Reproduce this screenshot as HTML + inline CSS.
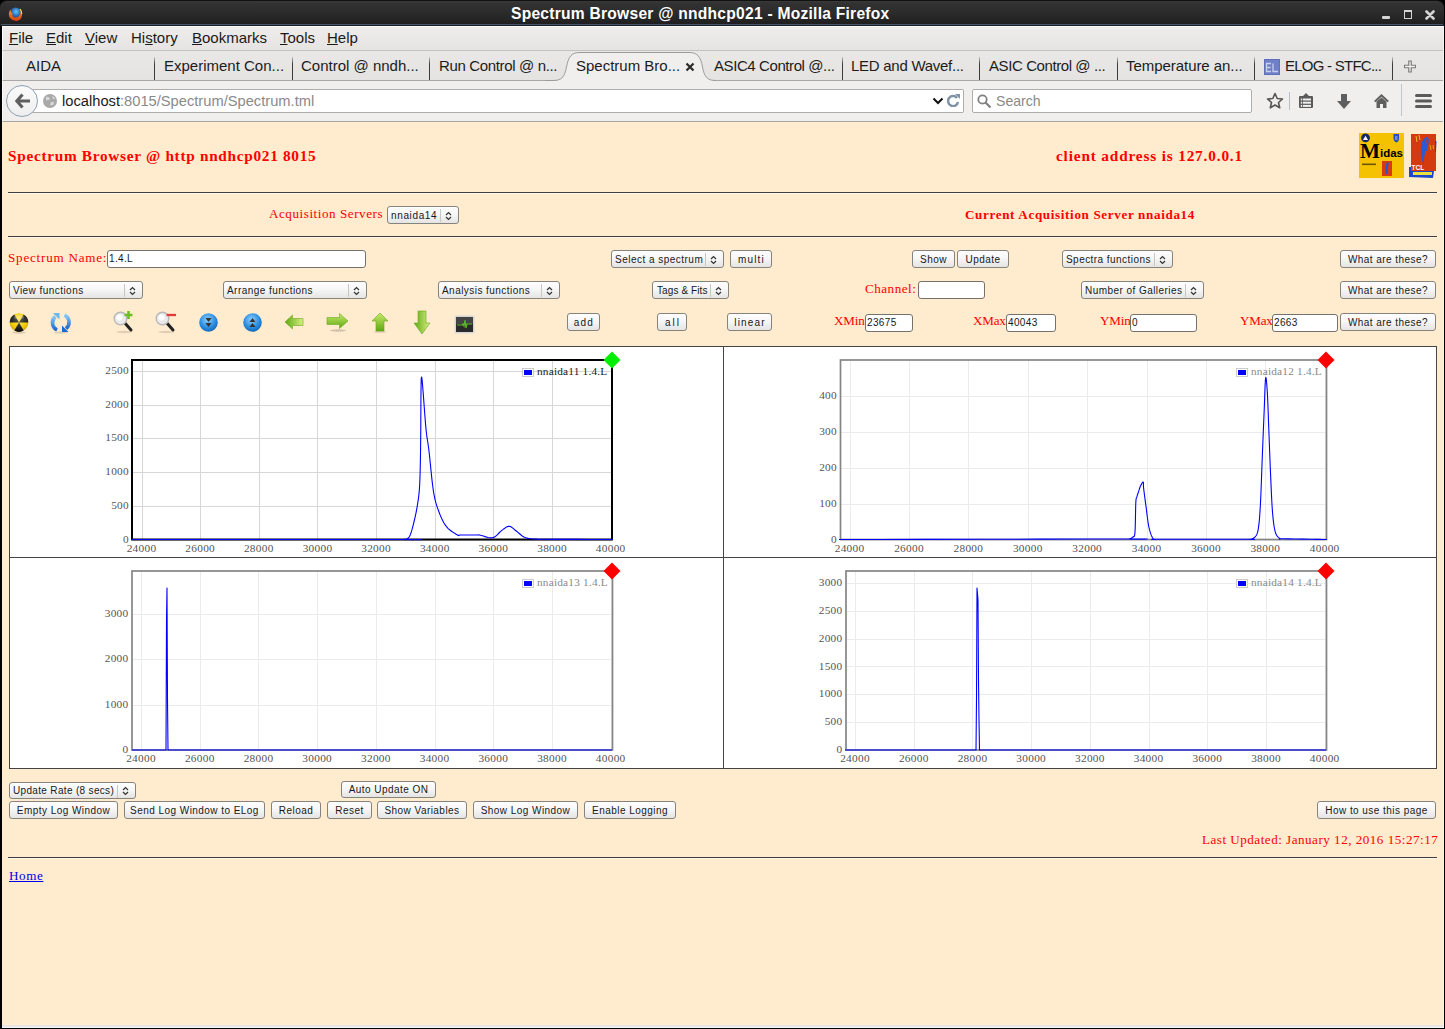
<!DOCTYPE html>
<html><head><meta charset="utf-8">
<style>
*{box-sizing:border-box;margin:0;padding:0}
html,body{width:1445px;height:1029px;overflow:hidden;background:#000;font-family:"Liberation Sans",sans-serif}
.a{position:absolute}
#title{left:0;top:0;width:1444px;height:26px;background:linear-gradient(#3a3a3a 0,#323232 8%,#2c2c2c 45%,#1d1d1d 100%);border-radius:7px 7px 0 0;border-top:1px solid #111}
#title .t{left:511px;top:4px;color:#fff;font-weight:bold;font-size:15.6px;letter-spacing:0.25px;white-space:nowrap}
#menu{left:2px;top:26px;width:1441px;height:24px;background:linear-gradient(#eeedeb,#e5e4e2);border-top:1px solid #fafafa;border-left:1px solid #fafafa}
#menu span{position:absolute;top:2px;font-size:15px;color:#1a1a1a}
#tabs{left:2px;top:50px;width:1441px;height:31px;background:linear-gradient(#e9e8e6,#e4e3e1);border-top:1px solid #c4c3c1;border-bottom:1px solid #a9a8a6;border-left:1px solid #fafafa}
.tab{position:absolute;top:57px;font-size:15px;color:#1c1c1c;white-space:nowrap}
.sep{position:absolute;top:57px;width:1px;height:23px;background:linear-gradient(#c8c8c8,#3c3c3c 30%,#3c3c3c)}
#nav{left:2px;top:81px;width:1441px;height:41px;background:#f0efed;border-bottom:1px solid #a6a5a3;border-left:1px solid #fafafa}
#bot{left:2px;top:1025px;width:1441px;height:2px;background:#e9e8e6}
</style></head><body>
<div id="title" class="a">
<svg class="a" style="left:7px;top:5px" width="16" height="16" viewBox="0 0 16 16">
<defs><radialGradient id="ffg" cx="0.55" cy="0.35" r="0.55"><stop offset="0" stop-color="#6ac4f0"/><stop offset="0.6" stop-color="#2a70c0"/><stop offset="1" stop-color="#1c3a80"/></radialGradient>
<linearGradient id="ffo" x1="0" y1="0" x2="0" y2="1"><stop offset="0" stop-color="#f8a020"/><stop offset="1" stop-color="#d83a10"/></linearGradient></defs>
<circle cx="8.5" cy="7.5" r="6" fill="url(#ffg)"/>
<path d="M2.5 5 Q1 9 3 12 Q6 15.5 10 15 Q14 14 15 9.5 Q15.5 5 13 3 Q14.5 7 12 10 Q9.5 12.5 6.5 11 Q4.5 9.5 5.5 7 Q3.5 7 3.8 4 Z" fill="url(#ffo)"/>
<path d="M13 3 Q15 5.5 14.8 8" stroke="#f8e040" stroke-width="1.2" fill="none"/>
</svg>
<div class="t a">Spectrum Browser @ nndhcp021 - Mozilla Firefox</div>
<div class="a" style="left:1px;top:23px;width:1442px;height:1px;background:#4d6481;opacity:0.8"></div>
<div class="a" style="left:1382px;top:15px;width:8px;height:3px;background:#d4d4d4;border-radius:1px"></div>
<div class="a" style="left:1404px;top:9px;width:8px;height:9px;border:1.5px solid #d4d4d4;border-top-width:2.5px"></div>
<svg class="a" style="left:1425px;top:9px" width="10" height="10" viewBox="0 0 10 10"><path d="M1.5 1.5 L8.5 8.5 M8.5 1.5 L1.5 8.5" stroke="#d4d4d4" stroke-width="2.6" stroke-linecap="round"/></svg>
</div>
<div id="menu" class="a">
<span style="left:6px"><u>F</u>ile</span>
<span style="left:43px"><u>E</u>dit</span>
<span style="left:82px"><u>V</u>iew</span>
<span style="left:128px">Hi<u>s</u>tory</span>
<span style="left:189px"><u>B</u>ookmarks</span>
<span style="left:277px"><u>T</u>ools</span>
<span style="left:324px"><u>H</u>elp</span>
</div>
<div id="tabs" class="a"></div>
<svg class="a" style="left:0;top:0" width="1445" height="82" viewBox="0 0 1445 82">
<path d="M545 82 L545 80.5 L553 80.5 C562 80.5 564.5 77 566.5 67 C568.5 56 572 52.5 580 52.5 L689 52.5 C697 52.5 700.5 56 702.5 67 C704.5 77 707 80.5 716 80.5 L716 82Z" fill="#f0efed"/>
<path d="M545 80.5 L553 80.5 C562 80.5 564.5 77 566.5 67 C568.5 56 572 52.5 580 52.5 L689 52.5 C697 52.5 700.5 56 702.5 67 C704.5 77 707 80.5 716 80.5" fill="none" stroke="#9c9b99" stroke-width="1"/>
<path d="M686.5 63.5 L693.5 70.5 M693.5 63.5 L686.5 70.5" stroke="#2a2a2a" stroke-width="2.2"/>
<rect x="1264" y="59" width="16" height="16" fill="#5f6fb8"/><rect x="1265" y="60" width="14" height="14" fill="#7080c8"/>
<path d="M1271 63.5 H1266.5 V71.5 H1271 M1266.5 67.5 H1270.5 M1273 63.5 V71.5 H1278" stroke="#c8d0f0" stroke-width="1.3" fill="none"/>
<path d="M1410 60.5 V72.5 M1404 66.5 H1416" stroke="#7a7a7a" stroke-width="3.6"/>
<path d="M1410 61.5 V71.5 M1405 66.5 H1415" stroke="#f0f0f0" stroke-width="1.3"/>
</svg>
<div class="a" style="left:0;top:0;width:1445px;height:0">
<span class="tab" style="left:26px">AIDA</span>
<span class="tab" style="left:164px">Experiment Con...</span>
<span class="tab" style="left:301px">Control @ nndh...</span>
<span class="tab" style="left:439px;letter-spacing:-0.35px">Run Control @ n...</span>
<span class="tab" style="left:576px">Spectrum Bro...</span>
<span class="tab" style="left:714px;letter-spacing:-0.41px">ASIC4 Control @...</span>
<span class="tab" style="left:851px;letter-spacing:-0.27px">LED and Wavef...</span>
<span class="tab" style="left:989px;letter-spacing:-0.41px">ASIC Control @ ...</span>
<span class="tab" style="left:1126px;letter-spacing:-0.05px">Temperature an...</span>
<span class="tab" style="left:1285px;letter-spacing:-0.75px">ELOG - STFC...</span>
<div class="sep" style="left:154px"></div>
<div class="sep" style="left:292px"></div>
<div class="sep" style="left:429px"></div>
<div class="sep" style="left:842px"></div>
<div class="sep" style="left:979px"></div>
<div class="sep" style="left:1117px"></div>
<div class="sep" style="left:1254px"></div>
<div class="sep" style="left:1392px"></div>
</div>
<div id="nav" class="a">
<div class="a" style="left:30px;top:8px;width:931px;height:24px;background:#fff;border:1px solid #aeadab;border-left:none;border-radius:0 2px 2px 0"></div>
<div class="a" style="left:3px;top:4px;width:32px;height:32px;border-radius:50%;border:1px solid #8fa0b3;background:linear-gradient(#fbfbfb,#eeeeee)"></div>
<svg class="a" style="left:12px;top:12px" width="16" height="16" viewBox="0 0 16 16"><path d="M7.5 1.5 L1.8 8 L7.5 14.5 M2.5 8 H15" stroke="#5f5f5f" stroke-width="3.2" fill="none" stroke-linejoin="miter"/></svg>
<svg class="a" style="left:39px;top:12px" width="16" height="16" viewBox="0 0 16 16"><circle cx="8" cy="8" r="7" fill="#a9a9a9"/><path d="M4 4 Q7 3 8 6 Q6 8 4 7Z M9 9 Q12 8 12 11 Q10 13 8 12Z M10 3 Q13 4 13 6 L11 6Z" fill="#d9d9d9"/></svg>
<div class="a" style="left:59px;top:12px;font-size:14.7px;color:#1a1a1a;white-space:nowrap">localhost<span style="color:#8a8a8a">:8015/Spectrum/Spectrum.tml</span></div>
<svg class="a" style="left:929px;top:16px" width="12" height="8" viewBox="0 0 12 8"><path d="M1.5 1.5 L6 6 L10.5 1.5" stroke="#111" stroke-width="2" fill="none"/></svg>
<svg class="a" style="left:944px;top:13px" width="14" height="13" viewBox="0 0 14 13"><path d="M10 4 A5 5 0 1 0 11 8" stroke="#7f93a6" stroke-width="2.5" fill="none"/><path d="M8 0 L13 0 L13 5Z" fill="#7f93a6"/></svg>
<div class="a" style="left:969px;top:8px;width:280px;height:24px;background:#fff;border:1px solid #aeadab;border-radius:2px"></div>
<svg class="a" style="left:974px;top:13px" width="15" height="15" viewBox="0 0 15 15"><circle cx="5.5" cy="5.5" r="4.2" stroke="#808080" stroke-width="1.8" fill="none"/><path d="M8.5 8.5 L13.5 13.5" stroke="#808080" stroke-width="2.2"/></svg>
<div class="a" style="left:993px;top:12px;font-size:14.1px;color:#8a8a8a">Search</div>
<svg class="a" style="left:1263px;top:11px" width="18" height="18" viewBox="0 0 18 18"><path d="M9 1.5 L11.2 6.5 L16.5 7 L12.5 10.5 L13.7 15.8 L9 13 L4.3 15.8 L5.5 10.5 L1.5 7 L6.8 6.5Z" stroke="#555" stroke-width="1.6" fill="none" stroke-linejoin="round"/></svg>
<div class="a" style="left:1286px;top:11px;width:1px;height:18px;background:#b8bfc8"></div>
<svg class="a" style="left:1295px;top:11px" width="16" height="17" viewBox="0 0 16 17"><path d="M8 1 L11 4 L14 4 Q15 4 15 5 L15 15 Q15 16 14 16 L2 16 Q1 16 1 15 L1 5 Q1 4 2 4 L5 4Z" fill="#5a5a5a"/><rect x="5" y="6.5" width="8" height="2" fill="#f0f0f0"/><rect x="5" y="9.7" width="8" height="2" fill="#f0f0f0"/><rect x="5" y="12.9" width="8" height="2" fill="#f0f0f0"/><rect x="2.8" y="6.5" width="1.4" height="2" fill="#f0f0f0"/><rect x="2.8" y="9.7" width="1.4" height="2" fill="#f0f0f0"/><rect x="2.8" y="12.9" width="1.4" height="2" fill="#f0f0f0"/></svg>
<svg class="a" style="left:1333px;top:12px" width="16" height="17" viewBox="0 0 16 17"><path d="M5 1 L11 1 L11 8 L15 8 L8 16 L1 8 L5 8Z" fill="#5f5f5f"/></svg>
<svg class="a" style="left:1370px;top:12px" width="17" height="16" viewBox="0 0 17 16"><path d="M8.5 1 L16 8 L14.5 9.3 L8.5 3.8 L2.5 9.3 L1 8Z" fill="#5f5f5f"/><path d="M3.5 8.5 L8.5 4.5 L13.5 8.5 L13.5 15 L10 15 L10 11 L7 11 L7 15 L3.5 15Z" fill="#5f5f5f"/></svg>
<div class="a" style="left:1398px;top:3px;width:1px;height:32px;background:#c0c6ce"></div>
<svg class="a" style="left:1412px;top:13px" width="17" height="14" viewBox="0 0 17 14"><rect x="0" y="0" width="17" height="3" rx="1.5" fill="#5a5a5a"/><rect x="0" y="5.5" width="17" height="3" rx="1.5" fill="#5a5a5a"/><rect x="0" y="11" width="17" height="3" rx="1.5" fill="#5a5a5a"/></svg>
</div>
<style>
#page{left:2px;top:122px;width:1441px;height:903px;background:#ffebcd}
.sv{position:absolute;font-family:"Liberation Serif",serif;color:#f00;white-space:nowrap;line-height:1}
.bt{position:absolute;height:18px;border:1px solid #86827d;border-radius:3px;background:linear-gradient(#fdfdfd 0%,#f7f7f7 45%,#e5e4e3 100%);font-family:"Liberation Sans",sans-serif;font-size:10px;letter-spacing:0.45px;color:#181818;text-align:center;line-height:17px;white-space:nowrap}
.sl{text-align:left;padding-left:3px}
.sl i{position:absolute;top:2px;width:1px;height:13px;background:#c8c6c3}
.sl b{position:absolute;top:2px;width:7px;height:10px}
.in{position:absolute;height:18px;background:#fff;border:1px solid #75716d;border-radius:3px;font-family:"Liberation Sans",sans-serif;font-size:10px;letter-spacing:0.36px;color:#181818;line-height:15px;padding-left:1px;white-space:nowrap}
.hr{position:absolute;height:2px;border-top:1px solid #3f3f3f;border-bottom:1px solid #fff4e6}
</style><div id="page" class="a"></div>
<div class="sv" style="left:8px;top:148px;font-size:15.3px;font-weight:bold;letter-spacing:0.7px">Spectrum Browser @ http nndhcp021 8015</div>
<div class="sv" style="left:1056px;top:148px;font-size:15.3px;font-weight:bold;letter-spacing:0.83px">client address is 127.0.0.1</div>
<svg class="a" style="left:1359px;top:133px" width="45" height="45" viewBox="0 0 45 45">
<rect x="0" y="0" width="45" height="45" fill="#f5c200"/>
<circle cx="6.5" cy="4.8" r="4.4" fill="#14296a"/>
<path d="M4 7 L6.5 2.8 L9 7Z" fill="#fff"/>
<path d="M34.5 1 L40 1 L40 5.5 Q40 8.5 37.2 9.5 Q34.5 8.5 34.5 5.5Z" fill="#2a4cc0"/>
<path d="M36 4 H38.5 M36 6 H38.5" stroke="#fff" stroke-width="0.7"/>
<text x="1" y="25" font-family="Liberation Serif" font-weight="bold" font-size="21" fill="#000" textLength="20" lengthAdjust="spacingAndGlyphs">M</text>
<text x="21" y="24" font-family="Liberation Sans" font-weight="bold" font-size="10" fill="#000" textLength="23" lengthAdjust="spacingAndGlyphs">idas</text>
<rect x="3" y="30.5" width="14" height="1.6" fill="#4a3a10" opacity="0.8"/>
<rect x="23" y="28" width="10" height="15" fill="#d63a12"/>
<path d="M29 29.5 Q27 34 28 41" stroke="#2a55c8" stroke-width="2" fill="none"/>
</svg>
<svg class="a" style="left:1408px;top:133px" width="30" height="46" viewBox="0 0 30 46">
<rect x="3" y="1" width="25" height="37" fill="#d43a10"/>
<path d="M1 34 L3 34 L3 38 L26 38 L25 45 L1 44Z" fill="#1a48c8"/>
<path d="M27 8 L28.5 8 L28 19 L27 19Z" fill="#1a48c8"/>
<path d="M17.5 4.5 Q12 8 13 20 Q13.5 27 16 33 Q15 26 17 20 Q19.5 13 17.5 4.5Z" fill="#2a5ad8"/>
<path d="M17.5 4.5 Q21 6 19.5 10 Q18 14 18 18" stroke="#2a5ad8" stroke-width="2" fill="none"/>
<path d="M8 3 L9 9 M11 2 L12 7" stroke="#f0c020" stroke-width="1" />
<path d="M22 12 L23 17 M25 12 L25.5 16" stroke="#f0c020" stroke-width="0.8" />
<text x="3.5" y="36.5" font-family="Liberation Sans" font-weight="bold" font-size="6.5" fill="#fff">TCL</text>
<rect x="5" y="39" width="19" height="3" fill="#e8e040"/>
</svg>

<div class="hr" style="left:8px;top:192px;width:1429px"></div>
<div class="sv" style="left:269px;top:207px;font-size:13.1px;font-weight:normal;letter-spacing:0.55px">Acquisition Servers</div>
<div class="bt sl" style="left:387px;top:206px;width:72px;height:18px;letter-spacing:0.64px">nnaida14<i style="left:52px"></i><b style="left:57px"><svg width="7" height="10" viewBox="0 0 7 10"><path d="M1 4 L3.5 1.5 L6 4 M1 6 L3.5 8.5 L6 6" stroke="#333" stroke-width="1.2" fill="none"/></svg></b></div>
<div class="sv" style="left:965px;top:208px;font-size:13.1px;font-weight:bold;letter-spacing:0.65px">Current Acquisition Server nnaida14</div>
<div class="hr" style="left:8px;top:236px;width:1429px"></div>
<div class="sv" style="left:8px;top:251px;font-size:13.1px;font-weight:normal;letter-spacing:0.78px">Spectrum Name:</div>
<div class="in" style="left:107px;top:250px;width:259px">1.4.L</div>
<div class="bt sl" style="left:611px;top:250px;width:113px;height:18px;letter-spacing:0.48px">Select a spectrum<i style="left:93px"></i><b style="left:98px"><svg width="7" height="10" viewBox="0 0 7 10"><path d="M1 4 L3.5 1.5 L6 4 M1 6 L3.5 8.5 L6 6" stroke="#333" stroke-width="1.2" fill="none"/></svg></b></div>
<div class="bt" style="left:730px;top:250px;width:42px;letter-spacing:1.16px;text-indent:1px">multi</div>
<div class="bt" style="left:912px;top:250px;width:43px;">Show</div>
<div class="bt" style="left:957px;top:250px;width:52px;">Update</div>
<div class="bt sl" style="left:1062px;top:250px;width:111px;height:18px;">Spectra functions<i style="left:91px"></i><b style="left:96px"><svg width="7" height="10" viewBox="0 0 7 10"><path d="M1 4 L3.5 1.5 L6 4 M1 6 L3.5 8.5 L6 6" stroke="#333" stroke-width="1.2" fill="none"/></svg></b></div>
<div class="bt" style="left:1340px;top:250px;width:96px;">What are these?</div>
<div class="bt sl" style="left:9px;top:281px;width:134px;height:18px;">View functions<i style="left:114px"></i><b style="left:119px"><svg width="7" height="10" viewBox="0 0 7 10"><path d="M1 4 L3.5 1.5 L6 4 M1 6 L3.5 8.5 L6 6" stroke="#333" stroke-width="1.2" fill="none"/></svg></b></div>
<div class="bt sl" style="left:223px;top:281px;width:144px;height:18px;">Arrange functions<i style="left:124px"></i><b style="left:129px"><svg width="7" height="10" viewBox="0 0 7 10"><path d="M1 4 L3.5 1.5 L6 4 M1 6 L3.5 8.5 L6 6" stroke="#333" stroke-width="1.2" fill="none"/></svg></b></div>
<div class="bt sl" style="left:438px;top:281px;width:122px;height:18px;">Analysis functions<i style="left:102px"></i><b style="left:107px"><svg width="7" height="10" viewBox="0 0 7 10"><path d="M1 4 L3.5 1.5 L6 4 M1 6 L3.5 8.5 L6 6" stroke="#333" stroke-width="1.2" fill="none"/></svg></b></div>
<div class="bt sl" style="left:652px;top:281px;width:77px;height:18px;letter-spacing:0.1px;padding-left:4px">Tags &amp; Fits<i style="left:57px"></i><b style="left:62px"><svg width="7" height="10" viewBox="0 0 7 10"><path d="M1 4 L3.5 1.5 L6 4 M1 6 L3.5 8.5 L6 6" stroke="#333" stroke-width="1.2" fill="none"/></svg></b></div>
<div class="sv" style="left:865px;top:282px;font-size:13.1px;font-weight:normal;letter-spacing:0.5px">Channel:</div>
<div class="in" style="left:918px;top:281px;width:67px"></div>
<div class="bt sl" style="left:1081px;top:281px;width:123px;height:18px;">Number of Galleries<i style="left:103px"></i><b style="left:108px"><svg width="7" height="10" viewBox="0 0 7 10"><path d="M1 4 L3.5 1.5 L6 4 M1 6 L3.5 8.5 L6 6" stroke="#333" stroke-width="1.2" fill="none"/></svg></b></div>
<div class="bt" style="left:1340px;top:281px;width:96px;">What are these?</div>
<div class="bt" style="left:567px;top:313px;width:33px;letter-spacing:1.2px;text-indent:1px">add</div>
<div class="bt" style="left:657px;top:313px;width:30px;letter-spacing:2px;text-indent:2px">all</div>
<div class="bt" style="left:727px;top:313px;width:45px;letter-spacing:1.16px;text-indent:1px">linear</div>
<div class="sv" style="left:834px;top:314px;font-size:13.1px;font-weight:normal;letter-spacing:-0.2px">XMin</div>
<div class="in" style="left:865px;top:314px;width:48px">23675</div>
<div class="sv" style="left:973px;top:314px;font-size:13.1px;font-weight:normal;letter-spacing:-0.2px">XMax</div>
<div class="in" style="left:1006px;top:314px;width:50px">40043</div>
<div class="sv" style="left:1100px;top:314px;font-size:13.1px;font-weight:normal;letter-spacing:-0.2px">YMin</div>
<div class="in" style="left:1130px;top:314px;width:67px">0</div>
<div class="sv" style="left:1240px;top:314px;font-size:13.1px;font-weight:normal;letter-spacing:-0.2px">YMax</div>
<div class="in" style="left:1272px;top:314px;width:66px">2663</div>
<div class="bt" style="left:1340px;top:313px;width:96px;">What are these?</div>

<svg class="a" style="left:9px;top:312px" width="21" height="22" viewBox="0 0 21 22">
<defs><radialGradient id="rg1" cx="0.5" cy="0.4" r="0.6"><stop offset="0" stop-color="#ffe860"/><stop offset="0.7" stop-color="#f0c800"/><stop offset="1" stop-color="#c89a00"/></radialGradient>
<radialGradient id="rg2" cx="0.5" cy="0.3" r="0.7"><stop offset="0" stop-color="#555"/><stop offset="1" stop-color="#0a0a0a"/></radialGradient></defs>
<ellipse cx="10" cy="20.5" rx="7" ry="1.2" fill="#000" opacity="0.15"/>
<circle cx="10" cy="10.5" r="9.3" fill="url(#rg1)"/>
<path d="M10 10.5 L14.65 2.45 A9.3 9.3 0 0 1 19.30 10.50Z M10 10.5 L14.65 18.55 A9.3 9.3 0 0 1 5.35 18.55Z M10 10.5 L0.70 10.50 A9.3 9.3 0 0 1 5.35 2.45Z" fill="url(#rg2)"/>
<ellipse cx="10" cy="5" rx="5" ry="2.5" fill="#fff" opacity="0.25"/>
</svg>
<svg class="a" style="left:50px;top:312px" width="22" height="22" viewBox="0 0 22 22">
<defs><linearGradient id="rfg" x1="0" y1="0" x2="0" y2="1"><stop offset="0" stop-color="#8ccaf5"/><stop offset="1" stop-color="#1a6ad0"/></linearGradient></defs>
<ellipse cx="11" cy="20.5" rx="7" ry="1.2" fill="#000" opacity="0.12"/>
<path d="M7 18 A8 8 0 0 1 5.5 4.5" stroke="url(#rfg)" stroke-width="3.6" fill="none"/>
<path d="M3 1 L9.5 1 L9.5 7.5Z" fill="#6ab8f0"/>
<path d="M14.5 3 A8 8 0 0 1 16 16.5" stroke="url(#rfg)" stroke-width="3.6" fill="none"/>
<path d="M12 20 L18.5 20 L12 13.5Z" fill="#1a6ad0"/>
</svg>
<svg class="a" style="left:113px;top:310px" width="22" height="24" viewBox="0 0 22 24">
<ellipse cx="11" cy="22" rx="8" ry="1.2" fill="#000" opacity="0.12"/>
<path d="M11 12 L18 20" stroke="#222" stroke-width="3" stroke-linecap="round"/>
<circle cx="7.5" cy="8.5" r="6.3" fill="#eaeaea" stroke="#b8b8b8" stroke-width="1.4"/>
<circle cx="6.5" cy="7.5" r="3" fill="#fff"/>
<path d="M15.5 1 V9 M11.5 5 H19.5" stroke="#6cbf1a" stroke-width="2.5"/>
</svg>
<svg class="a" style="left:155px;top:310px" width="22" height="24" viewBox="0 0 22 24">
<ellipse cx="11" cy="22" rx="8" ry="1.2" fill="#000" opacity="0.12"/>
<path d="M11 12 L18 20" stroke="#222" stroke-width="3" stroke-linecap="round"/>
<circle cx="7.5" cy="8.5" r="6.3" fill="#eaeaea" stroke="#b8b8b8" stroke-width="1.4"/>
<circle cx="6.5" cy="7.5" r="3" fill="#fff"/>
<path d="M11.5 5 H21" stroke="#e03a3a" stroke-width="2.3"/>
</svg>
<svg class="a" style="left:198px;top:312px" width="21" height="21" viewBox="0 0 21 21">
<defs><radialGradient id="rgb" cx="0.45" cy="0.35" r="0.7"><stop offset="0" stop-color="#8fd0ff"/><stop offset="0.6" stop-color="#2a8de0"/><stop offset="1" stop-color="#1060b0"/></radialGradient></defs>
<circle cx="10.5" cy="10.5" r="9.3" fill="url(#rgb)"/>
<path d="M7.5 6 L10.5 10 L13.5 6Z M7.5 11 L10.5 15 L13.5 11Z" fill="#333"/>
</svg>
<svg class="a" style="left:242px;top:312px" width="21" height="21" viewBox="0 0 21 21">
<circle cx="10.5" cy="10.5" r="9.3" fill="url(#rgb)"/>
<path d="M7.5 10 L10.5 6 L13.5 10Z M7.5 15 L10.5 11 L13.5 15Z" fill="#333"/>
</svg>
<svg class="a" style="left:284px;top:313px" width="20" height="19" viewBox="0 0 20 19">
<defs><linearGradient id="gg" x1="0" y1="0" x2="0" y2="1"><stop offset="0" stop-color="#c8ea6a"/><stop offset="1" stop-color="#5ea812"/></linearGradient>
<linearGradient id="gh" x1="0" y1="0" x2="1" y2="0"><stop offset="0" stop-color="#5ea812"/><stop offset="1" stop-color="#d8f080"/></linearGradient></defs>
<path d="M1 9 L8.5 2 L8.5 5.5 L19 5.5 L19 12.5 L8.5 12.5 L8.5 16 Z" fill="url(#gh)" stroke="#6aa820" stroke-width="0.6"/>
</svg>
<svg class="a" style="left:326px;top:312px" width="23" height="20" viewBox="0 0 23 20">
<ellipse cx="12" cy="18.5" rx="8" ry="1.2" fill="#000" opacity="0.18"/>
<path d="M22 9 L13.5 1.5 L13.5 5.5 L1 5.5 L1 12.5 L13.5 12.5 L13.5 16.5 Z" fill="url(#gg)" stroke="#6aa820" stroke-width="0.6"/>
</svg>
<svg class="a" style="left:371px;top:312px" width="18" height="21" viewBox="0 0 18 21">
<ellipse cx="9" cy="19.8" rx="6" ry="1" fill="#000" opacity="0.15"/>
<path d="M9 1 L17 9 L13 9 L13 19 L5 19 L5 9 L1 9 Z" fill="url(#gg)" stroke="#6aa820" stroke-width="0.6"/>
</svg>
<svg class="a" style="left:413px;top:310px" width="18" height="25" viewBox="0 0 18 25">
<path d="M9 24 L17 13 L13 13 L13 1 L5 1 L5 13 L1 13 Z" fill="url(#gh)" stroke="#6aa820" stroke-width="0.6" transform="rotate(0)"/>
</svg>
<svg class="a" style="left:454px;top:315px" width="21" height="19" viewBox="0 0 21 19">
<rect x="0.5" y="0.5" width="20" height="18" rx="1.5" fill="#d8d8d8"/>
<rect x="2" y="2" width="17" height="15" fill="#2a2a2a"/>
<rect x="2" y="2" width="17" height="7" fill="#444"/>
<path d="M3 10 L8 10 L9 9 L10 11 L11 5 L12 13 L13 9 L18 9" stroke="#5cb82a" stroke-width="1.2" fill="none"/>
</svg>

<div class="a" style="left:9px;top:346px;width:1428px;height:423px;background:#fff;border:1px solid #444"></div>
<div class="a" style="left:723px;top:346px;width:1px;height:423px;background:#444"></div>
<div class="a" style="left:9px;top:557px;width:1428px;height:1px;background:#444"></div>
<svg class="a" style="left:0;top:0" width="1445" height="1029" viewBox="0 0 1445 1029">
<line x1="142.5" y1="360" x2="142.5" y2="539.5" stroke="#d6d6d6" stroke-width="1"/>
<line x1="200.5" y1="360" x2="200.5" y2="539.5" stroke="#d6d6d6" stroke-width="1"/>
<line x1="259.5" y1="360" x2="259.5" y2="539.5" stroke="#d6d6d6" stroke-width="1"/>
<line x1="317.5" y1="360" x2="317.5" y2="539.5" stroke="#d6d6d6" stroke-width="1"/>
<line x1="376.5" y1="360" x2="376.5" y2="539.5" stroke="#d6d6d6" stroke-width="1"/>
<line x1="435.5" y1="360" x2="435.5" y2="539.5" stroke="#d6d6d6" stroke-width="1"/>
<line x1="493.5" y1="360" x2="493.5" y2="539.5" stroke="#d6d6d6" stroke-width="1"/>
<line x1="552.5" y1="360" x2="552.5" y2="539.5" stroke="#d6d6d6" stroke-width="1"/>
<line x1="611.5" y1="360" x2="611.5" y2="539.5" stroke="#d6d6d6" stroke-width="1"/>
<line x1="132" y1="540.5" x2="612" y2="540.5" stroke="#d6d6d6" stroke-width="1"/>
<line x1="132" y1="506.5" x2="612" y2="506.5" stroke="#d6d6d6" stroke-width="1"/>
<line x1="132" y1="472.5" x2="612" y2="472.5" stroke="#d6d6d6" stroke-width="1"/>
<line x1="132" y1="438.5" x2="612" y2="438.5" stroke="#d6d6d6" stroke-width="1"/>
<line x1="132" y1="405.5" x2="612" y2="405.5" stroke="#d6d6d6" stroke-width="1"/>
<line x1="132" y1="371.5" x2="612" y2="371.5" stroke="#d6d6d6" stroke-width="1"/>
<rect x="132" y="360" width="480" height="179.5" fill="none" stroke="#000" stroke-width="2"/>
<clipPath id="cp1"><rect x="131" y="360" width="482" height="180.5"/></clipPath>
<polyline clip-path="url(#cp1)" points="132.00,539.50 129.28,539.50 123.04,539.50 116.88,539.50 114.41,539.50 119.25,539.50 135.00,539.50 167.16,539.50 213.93,539.50 268.00,539.50 322.07,539.50 368.84,539.50 401.00,539.50 416.69,539.53 421.39,539.61 418.78,539.69 412.56,539.72 406.40,539.67 404.00,539.50 404.78,539.32 405.68,539.19 406.64,538.97 407.63,538.54 408.60,537.76 409.50,536.50 410.34,534.67 411.17,532.36 411.97,529.71 412.74,526.84 413.49,523.89 414.20,521.00 414.88,518.12 415.54,515.12 416.17,512.05 416.77,508.93 417.31,505.81 417.80,502.70 418.23,499.82 418.60,497.17 418.92,494.52 419.20,491.60 419.46,488.18 419.70,484.00 419.91,479.10 420.09,473.69 420.24,467.77 420.37,461.34 420.49,454.42 420.60,447.00 420.69,438.41 420.77,428.52 420.83,418.12 420.88,408.04 420.93,399.06 421.00,392.00 421.07,386.88 421.13,383.07 421.19,380.38 421.27,378.59 421.37,377.53 421.50,377.00 421.65,376.98 421.80,377.63 421.98,379.00 422.20,381.15 422.46,384.13 422.80,388.00 423.23,393.32 423.73,400.15 424.29,407.81 424.88,415.63 425.46,422.92 426.00,429.00 426.49,433.55 426.96,437.05 427.42,440.03 427.90,442.99 428.42,446.48 429.00,451.00 429.65,456.92 430.35,463.90 431.09,471.40 431.87,478.87 432.67,485.79 433.50,491.60 434.34,496.23 435.19,500.11 436.06,503.42 436.98,506.37 437.96,509.16 439.00,512.00 440.09,514.85 441.22,517.56 442.41,520.11 443.67,522.49 445.02,524.69 446.50,526.70 448.22,528.55 450.20,530.25 452.28,531.77 454.30,533.09 456.09,534.17 457.50,535.00 458.31,535.48 458.60,535.61 458.68,535.52 458.82,535.31 459.33,535.10 460.50,535.00 462.59,535.00 465.41,535.00 468.60,535.00 471.79,535.00 474.61,535.00 476.70,535.00 477.85,534.97 478.31,534.90 478.41,534.82 478.46,534.79 478.78,534.84 479.70,535.00 481.32,535.42 483.40,536.10 485.76,536.86 488.21,537.52 490.55,537.89 492.60,537.80 494.37,537.12 496.01,535.97 497.54,534.53 499.00,533.00 500.41,531.56 501.80,530.40 503.14,529.42 504.40,528.45 505.61,527.57 506.80,526.87 507.99,526.42 509.20,526.30 510.41,526.59 511.60,527.24 512.79,528.14 514.00,529.19 515.26,530.27 516.60,531.30 517.96,532.35 519.33,533.54 520.74,534.77 522.25,535.95 523.92,536.99 525.80,537.80 528.08,538.36 530.76,538.73 533.59,538.96 536.33,539.10 538.75,539.19 540.60,539.30 541.06,539.39 540.16,539.41 538.94,539.39 538.41,539.35 539.63,539.31 543.60,539.31 551.61,539.33 563.09,539.36 576.30,539.40 589.51,539.44 600.99,539.47 609.00,539.49 613.15,539.50 614.73,539.51 614.59,539.51 613.53,539.50 612.40,539.50 612.00,539.50" fill="none" stroke="#0000ff" stroke-width="1.1" stroke-linejoin="round"/>
<rect x="522.5" y="368.5" width="11" height="8" fill="#fff" stroke="#ccc" stroke-width="1"/>
<rect x="524" y="370" width="8" height="5" fill="#0000ff"/>
<text x="537" y="375" font-family="Liberation Serif" font-size="11.3" fill="#1a1a1a" letter-spacing="0.2">nnaida11 1.4.L</text>
<path d="M612 351.5 L620.5 360 L612 368.5 L603.5 360Z" fill="#00ee00"/>
<text x="141.5" y="551.5" text-anchor="middle" font-family="Liberation Serif" font-size="11.3" fill="#545454" letter-spacing="0.3">24000</text>
<text x="200.2" y="551.5" text-anchor="middle" font-family="Liberation Serif" font-size="11.3" fill="#545454" letter-spacing="0.3">26000</text>
<text x="258.8" y="551.5" text-anchor="middle" font-family="Liberation Serif" font-size="11.3" fill="#545454" letter-spacing="0.3">28000</text>
<text x="317.5" y="551.5" text-anchor="middle" font-family="Liberation Serif" font-size="11.3" fill="#545454" letter-spacing="0.3">30000</text>
<text x="376.1" y="551.5" text-anchor="middle" font-family="Liberation Serif" font-size="11.3" fill="#545454" letter-spacing="0.3">32000</text>
<text x="434.8" y="551.5" text-anchor="middle" font-family="Liberation Serif" font-size="11.3" fill="#545454" letter-spacing="0.3">34000</text>
<text x="493.4" y="551.5" text-anchor="middle" font-family="Liberation Serif" font-size="11.3" fill="#545454" letter-spacing="0.3">36000</text>
<text x="552.1" y="551.5" text-anchor="middle" font-family="Liberation Serif" font-size="11.3" fill="#545454" letter-spacing="0.3">38000</text>
<text x="610.7" y="551.5" text-anchor="middle" font-family="Liberation Serif" font-size="11.3" fill="#545454" letter-spacing="0.3">40000</text>
<text x="129" y="542.5" text-anchor="end" font-family="Liberation Serif" font-size="11.3" fill="#545454" letter-spacing="0.3">0</text>
<text x="129" y="508.8" text-anchor="end" font-family="Liberation Serif" font-size="11.3" fill="#545454" letter-spacing="0.3">500</text>
<text x="129" y="475.1" text-anchor="end" font-family="Liberation Serif" font-size="11.3" fill="#545454" letter-spacing="0.3">1000</text>
<text x="129" y="441.4" text-anchor="end" font-family="Liberation Serif" font-size="11.3" fill="#545454" letter-spacing="0.3">1500</text>
<text x="129" y="407.7" text-anchor="end" font-family="Liberation Serif" font-size="11.3" fill="#545454" letter-spacing="0.3">2000</text>
<text x="129" y="374.0" text-anchor="end" font-family="Liberation Serif" font-size="11.3" fill="#545454" letter-spacing="0.3">2500</text>
</svg>
<svg class="a" style="left:0;top:0" width="1445" height="1029" viewBox="0 0 1445 1029">
<line x1="850.5" y1="360" x2="850.5" y2="539.5" stroke="#ebebeb" stroke-width="1"/>
<line x1="909.5" y1="360" x2="909.5" y2="539.5" stroke="#ebebeb" stroke-width="1"/>
<line x1="968.5" y1="360" x2="968.5" y2="539.5" stroke="#ebebeb" stroke-width="1"/>
<line x1="1028.5" y1="360" x2="1028.5" y2="539.5" stroke="#ebebeb" stroke-width="1"/>
<line x1="1087.5" y1="360" x2="1087.5" y2="539.5" stroke="#ebebeb" stroke-width="1"/>
<line x1="1147.5" y1="360" x2="1147.5" y2="539.5" stroke="#ebebeb" stroke-width="1"/>
<line x1="1206.5" y1="360" x2="1206.5" y2="539.5" stroke="#ebebeb" stroke-width="1"/>
<line x1="1265.5" y1="360" x2="1265.5" y2="539.5" stroke="#ebebeb" stroke-width="1"/>
<line x1="1325.5" y1="360" x2="1325.5" y2="539.5" stroke="#ebebeb" stroke-width="1"/>
<line x1="840" y1="540.5" x2="1326" y2="540.5" stroke="#ebebeb" stroke-width="1"/>
<line x1="840" y1="504.5" x2="1326" y2="504.5" stroke="#ebebeb" stroke-width="1"/>
<line x1="840" y1="468.5" x2="1326" y2="468.5" stroke="#ebebeb" stroke-width="1"/>
<line x1="840" y1="432.5" x2="1326" y2="432.5" stroke="#ebebeb" stroke-width="1"/>
<line x1="840" y1="396.5" x2="1326" y2="396.5" stroke="#ebebeb" stroke-width="1"/>
<rect x="840.5" y="360" width="486" height="179.5" fill="none" stroke="#858585" stroke-width="1.7"/>
<clipPath id="cp2"><rect x="839" y="360" width="488" height="180.5"/></clipPath>
<polyline clip-path="url(#cp2)" points="840.00,539.50 837.09,539.51 830.43,539.52 823.84,539.53 821.19,539.53 826.29,539.52 843.00,539.49 877.14,539.44 926.81,539.35 984.25,539.25 1041.69,539.15 1091.36,539.06 1125.50,539.01 1142.16,539.00 1147.15,539.04 1144.38,539.10 1137.74,539.13 1131.15,539.11 1128.50,539.00 1129.19,538.82 1129.98,538.59 1130.81,538.31 1131.63,537.96 1132.38,537.53 1133.00,537.00 1133.49,536.62 1133.90,536.46 1134.23,536.21 1134.51,535.58 1134.77,534.27 1135.00,532.00 1135.20,528.25 1135.35,523.16 1135.46,517.39 1135.56,511.62 1135.67,506.50 1135.80,502.70 1135.95,500.38 1136.09,499.04 1136.24,498.36 1136.40,498.00 1136.58,497.66 1136.80,497.00 1137.05,496.08 1137.34,495.19 1137.64,494.29 1137.96,493.40 1138.28,492.51 1138.60,491.60 1138.90,490.66 1139.20,489.69 1139.49,488.71 1139.80,487.76 1140.14,486.84 1140.50,486.00 1140.93,485.12 1141.43,484.18 1141.94,483.27 1142.44,482.53 1142.87,482.07 1143.20,482.00 1143.38,482.28 1143.43,482.80 1143.42,483.60 1143.40,484.71 1143.44,486.17 1143.60,488.00 1143.88,490.33 1144.24,493.14 1144.65,496.31 1145.10,499.67 1145.55,503.08 1146.00,506.40 1146.43,509.78 1146.87,513.37 1147.32,517.01 1147.79,520.54 1148.28,523.83 1148.80,526.70 1149.37,529.19 1149.97,531.44 1150.61,533.43 1151.25,535.15 1151.88,536.61 1152.50,537.80 1153.10,538.62 1153.70,539.07 1154.29,539.24 1154.88,539.27 1155.45,539.25 1156.00,539.30 1155.54,539.39 1153.88,539.41 1152.20,539.39 1151.70,539.36 1153.57,539.32 1159.00,539.30 1169.77,539.30 1185.27,539.30 1203.15,539.30 1221.03,539.30 1236.53,539.30 1247.30,539.30 1252.71,539.34 1254.52,539.42 1253.97,539.51 1252.27,539.54 1250.64,539.49 1250.30,539.30 1251.12,539.01 1252.08,538.67 1253.12,538.23 1254.15,537.67 1255.10,536.94 1255.90,536.00 1256.53,534.97 1257.04,533.89 1257.48,532.64 1257.87,531.11 1258.23,529.17 1258.60,526.70 1258.96,523.81 1259.30,520.61 1259.61,517.00 1259.90,512.88 1260.20,508.15 1260.50,502.70 1260.80,496.30 1261.10,488.99 1261.40,481.06 1261.70,472.82 1262.00,464.57 1262.30,456.60 1262.62,448.69 1262.94,440.56 1263.27,432.42 1263.60,424.47 1263.91,416.93 1264.20,410.00 1264.46,403.29 1264.69,396.55 1264.91,390.21 1265.13,384.72 1265.36,380.50 1265.60,378.00 1265.87,377.41 1266.15,378.41 1266.44,380.69 1266.74,383.93 1267.02,387.81 1267.30,392.00 1267.56,396.72 1267.80,402.26 1268.04,408.44 1268.29,415.07 1268.53,421.95 1268.80,428.90 1269.08,436.16 1269.37,443.92 1269.67,451.94 1269.98,459.97 1270.29,467.74 1270.60,475.00 1270.90,481.89 1271.19,488.64 1271.49,495.13 1271.80,501.26 1272.13,506.92 1272.50,512.00 1272.89,516.47 1273.30,520.42 1273.72,523.89 1274.19,526.95 1274.71,529.63 1275.30,532.00 1275.99,533.96 1276.79,535.46 1277.64,536.60 1278.49,537.45 1279.29,538.12 1280.00,538.70 1280.17,539.09 1279.76,539.19 1279.29,539.10 1279.32,538.93 1280.38,538.78 1283.00,538.75 1287.95,538.84 1294.96,538.96 1303.00,539.10 1311.04,539.24 1318.05,539.36 1323.00,539.45 1325.68,539.49 1326.85,539.51 1327.00,539.52 1326.59,539.51 1326.10,539.50 1326.00,539.50" fill="none" stroke="#0000ff" stroke-width="1.1" stroke-linejoin="round"/>
<rect x="1236.5" y="368.5" width="11" height="8" fill="#fff" stroke="#ccc" stroke-width="1"/>
<rect x="1238" y="370" width="8" height="5" fill="#0000ff"/>
<text x="1251" y="375" font-family="Liberation Serif" font-size="11.3" fill="#8a8a8a" letter-spacing="0.2">nnaida12 1.4.L</text>
<path d="M1326 351.5 L1334.5 360 L1326 368.5 L1317.5 360Z" fill="#ff0000"/>
<text x="849.6" y="551.5" text-anchor="middle" font-family="Liberation Serif" font-size="11.3" fill="#545454" letter-spacing="0.3">24000</text>
<text x="909.0" y="551.5" text-anchor="middle" font-family="Liberation Serif" font-size="11.3" fill="#545454" letter-spacing="0.3">26000</text>
<text x="968.4" y="551.5" text-anchor="middle" font-family="Liberation Serif" font-size="11.3" fill="#545454" letter-spacing="0.3">28000</text>
<text x="1027.8" y="551.5" text-anchor="middle" font-family="Liberation Serif" font-size="11.3" fill="#545454" letter-spacing="0.3">30000</text>
<text x="1087.2" y="551.5" text-anchor="middle" font-family="Liberation Serif" font-size="11.3" fill="#545454" letter-spacing="0.3">32000</text>
<text x="1146.6" y="551.5" text-anchor="middle" font-family="Liberation Serif" font-size="11.3" fill="#545454" letter-spacing="0.3">34000</text>
<text x="1206.0" y="551.5" text-anchor="middle" font-family="Liberation Serif" font-size="11.3" fill="#545454" letter-spacing="0.3">36000</text>
<text x="1265.3" y="551.5" text-anchor="middle" font-family="Liberation Serif" font-size="11.3" fill="#545454" letter-spacing="0.3">38000</text>
<text x="1324.7" y="551.5" text-anchor="middle" font-family="Liberation Serif" font-size="11.3" fill="#545454" letter-spacing="0.3">40000</text>
<text x="837" y="542.5" text-anchor="end" font-family="Liberation Serif" font-size="11.3" fill="#545454" letter-spacing="0.3">0</text>
<text x="837" y="506.5" text-anchor="end" font-family="Liberation Serif" font-size="11.3" fill="#545454" letter-spacing="0.3">100</text>
<text x="837" y="470.6" text-anchor="end" font-family="Liberation Serif" font-size="11.3" fill="#545454" letter-spacing="0.3">200</text>
<text x="837" y="434.6" text-anchor="end" font-family="Liberation Serif" font-size="11.3" fill="#545454" letter-spacing="0.3">300</text>
<text x="837" y="398.6" text-anchor="end" font-family="Liberation Serif" font-size="11.3" fill="#545454" letter-spacing="0.3">400</text>
</svg>
<svg class="a" style="left:0;top:0" width="1445" height="1029" viewBox="0 0 1445 1029">
<line x1="141.5" y1="571" x2="141.5" y2="750" stroke="#ebebeb" stroke-width="1"/>
<line x1="200.5" y1="571" x2="200.5" y2="750" stroke="#ebebeb" stroke-width="1"/>
<line x1="258.5" y1="571" x2="258.5" y2="750" stroke="#ebebeb" stroke-width="1"/>
<line x1="317.5" y1="571" x2="317.5" y2="750" stroke="#ebebeb" stroke-width="1"/>
<line x1="376.5" y1="571" x2="376.5" y2="750" stroke="#ebebeb" stroke-width="1"/>
<line x1="435.5" y1="571" x2="435.5" y2="750" stroke="#ebebeb" stroke-width="1"/>
<line x1="493.5" y1="571" x2="493.5" y2="750" stroke="#ebebeb" stroke-width="1"/>
<line x1="552.5" y1="571" x2="552.5" y2="750" stroke="#ebebeb" stroke-width="1"/>
<line x1="611.5" y1="571" x2="611.5" y2="750" stroke="#ebebeb" stroke-width="1"/>
<line x1="131.5" y1="750.5" x2="612" y2="750.5" stroke="#ebebeb" stroke-width="1"/>
<line x1="131.5" y1="705.5" x2="612" y2="705.5" stroke="#ebebeb" stroke-width="1"/>
<line x1="131.5" y1="659.5" x2="612" y2="659.5" stroke="#ebebeb" stroke-width="1"/>
<line x1="131.5" y1="614.5" x2="612" y2="614.5" stroke="#ebebeb" stroke-width="1"/>
<rect x="132.0" y="571" width="480.5" height="179" fill="none" stroke="#858585" stroke-width="1.7"/>
<clipPath id="cp3"><rect x="130.5" y="571" width="482.5" height="180"/></clipPath>
<polyline clip-path="url(#cp3)" points="132.00,750.00 166.00,750.00 166.50,620.00 167.00,588.00 167.50,700.00 168.00,750.00 612.00,750.00" fill="none" stroke="#0000ff" stroke-width="1.1" stroke-linejoin="round"/>
<rect x="522.5" y="579.5" width="11" height="8" fill="#fff" stroke="#ccc" stroke-width="1"/>
<rect x="524" y="581" width="8" height="5" fill="#0000ff"/>
<text x="537" y="586" font-family="Liberation Serif" font-size="11.3" fill="#8a8a8a" letter-spacing="0.2">nnaida13 1.4.L</text>
<path d="M612 562.5 L620.5 571 L612 579.5 L603.5 571Z" fill="#ff0000"/>
<text x="141.0" y="762" text-anchor="middle" font-family="Liberation Serif" font-size="11.3" fill="#545454" letter-spacing="0.3">24000</text>
<text x="199.8" y="762" text-anchor="middle" font-family="Liberation Serif" font-size="11.3" fill="#545454" letter-spacing="0.3">26000</text>
<text x="258.5" y="762" text-anchor="middle" font-family="Liberation Serif" font-size="11.3" fill="#545454" letter-spacing="0.3">28000</text>
<text x="317.2" y="762" text-anchor="middle" font-family="Liberation Serif" font-size="11.3" fill="#545454" letter-spacing="0.3">30000</text>
<text x="375.9" y="762" text-anchor="middle" font-family="Liberation Serif" font-size="11.3" fill="#545454" letter-spacing="0.3">32000</text>
<text x="434.6" y="762" text-anchor="middle" font-family="Liberation Serif" font-size="11.3" fill="#545454" letter-spacing="0.3">34000</text>
<text x="493.3" y="762" text-anchor="middle" font-family="Liberation Serif" font-size="11.3" fill="#545454" letter-spacing="0.3">36000</text>
<text x="552.0" y="762" text-anchor="middle" font-family="Liberation Serif" font-size="11.3" fill="#545454" letter-spacing="0.3">38000</text>
<text x="610.7" y="762" text-anchor="middle" font-family="Liberation Serif" font-size="11.3" fill="#545454" letter-spacing="0.3">40000</text>
<text x="128.5" y="753.0" text-anchor="end" font-family="Liberation Serif" font-size="11.3" fill="#545454" letter-spacing="0.3">0</text>
<text x="128.5" y="707.5" text-anchor="end" font-family="Liberation Serif" font-size="11.3" fill="#545454" letter-spacing="0.3">1000</text>
<text x="128.5" y="662.0" text-anchor="end" font-family="Liberation Serif" font-size="11.3" fill="#545454" letter-spacing="0.3">2000</text>
<text x="128.5" y="616.5" text-anchor="end" font-family="Liberation Serif" font-size="11.3" fill="#545454" letter-spacing="0.3">3000</text>
</svg>
<svg class="a" style="left:0;top:0" width="1445" height="1029" viewBox="0 0 1445 1029">
<line x1="855.5" y1="571" x2="855.5" y2="750" stroke="#ebebeb" stroke-width="1"/>
<line x1="914.5" y1="571" x2="914.5" y2="750" stroke="#ebebeb" stroke-width="1"/>
<line x1="972.5" y1="571" x2="972.5" y2="750" stroke="#ebebeb" stroke-width="1"/>
<line x1="1031.5" y1="571" x2="1031.5" y2="750" stroke="#ebebeb" stroke-width="1"/>
<line x1="1090.5" y1="571" x2="1090.5" y2="750" stroke="#ebebeb" stroke-width="1"/>
<line x1="1149.5" y1="571" x2="1149.5" y2="750" stroke="#ebebeb" stroke-width="1"/>
<line x1="1207.5" y1="571" x2="1207.5" y2="750" stroke="#ebebeb" stroke-width="1"/>
<line x1="1266.5" y1="571" x2="1266.5" y2="750" stroke="#ebebeb" stroke-width="1"/>
<line x1="1325.5" y1="571" x2="1325.5" y2="750" stroke="#ebebeb" stroke-width="1"/>
<line x1="845.5" y1="750.5" x2="1326" y2="750.5" stroke="#ebebeb" stroke-width="1"/>
<line x1="845.5" y1="722.5" x2="1326" y2="722.5" stroke="#ebebeb" stroke-width="1"/>
<line x1="845.5" y1="694.5" x2="1326" y2="694.5" stroke="#ebebeb" stroke-width="1"/>
<line x1="845.5" y1="666.5" x2="1326" y2="666.5" stroke="#ebebeb" stroke-width="1"/>
<line x1="845.5" y1="639.5" x2="1326" y2="639.5" stroke="#ebebeb" stroke-width="1"/>
<line x1="845.5" y1="611.5" x2="1326" y2="611.5" stroke="#ebebeb" stroke-width="1"/>
<line x1="845.5" y1="583.5" x2="1326" y2="583.5" stroke="#ebebeb" stroke-width="1"/>
<rect x="846.0" y="571" width="480.5" height="179" fill="none" stroke="#858585" stroke-width="1.7"/>
<clipPath id="cp4"><rect x="844.5" y="571" width="482.5" height="180"/></clipPath>
<polyline clip-path="url(#cp4)" points="845.00,750.00 976.00,750.00 976.50,700.00 977.00,588.00 978.00,600.00 978.50,680.00 979.00,720.00 979.50,750.00 1326.00,750.00" fill="none" stroke="#0000ff" stroke-width="1.1" stroke-linejoin="round"/>
<rect x="1236.5" y="579.5" width="11" height="8" fill="#fff" stroke="#ccc" stroke-width="1"/>
<rect x="1238" y="581" width="8" height="5" fill="#0000ff"/>
<text x="1251" y="586" font-family="Liberation Serif" font-size="11.3" fill="#8a8a8a" letter-spacing="0.2">nnaida14 1.4.L</text>
<path d="M1326 562.5 L1334.5 571 L1326 579.5 L1317.5 571Z" fill="#ff0000"/>
<text x="855.0" y="762" text-anchor="middle" font-family="Liberation Serif" font-size="11.3" fill="#545454" letter-spacing="0.3">24000</text>
<text x="913.8" y="762" text-anchor="middle" font-family="Liberation Serif" font-size="11.3" fill="#545454" letter-spacing="0.3">26000</text>
<text x="972.5" y="762" text-anchor="middle" font-family="Liberation Serif" font-size="11.3" fill="#545454" letter-spacing="0.3">28000</text>
<text x="1031.2" y="762" text-anchor="middle" font-family="Liberation Serif" font-size="11.3" fill="#545454" letter-spacing="0.3">30000</text>
<text x="1089.9" y="762" text-anchor="middle" font-family="Liberation Serif" font-size="11.3" fill="#545454" letter-spacing="0.3">32000</text>
<text x="1148.6" y="762" text-anchor="middle" font-family="Liberation Serif" font-size="11.3" fill="#545454" letter-spacing="0.3">34000</text>
<text x="1207.3" y="762" text-anchor="middle" font-family="Liberation Serif" font-size="11.3" fill="#545454" letter-spacing="0.3">36000</text>
<text x="1266.0" y="762" text-anchor="middle" font-family="Liberation Serif" font-size="11.3" fill="#545454" letter-spacing="0.3">38000</text>
<text x="1324.7" y="762" text-anchor="middle" font-family="Liberation Serif" font-size="11.3" fill="#545454" letter-spacing="0.3">40000</text>
<text x="842.5" y="753.0" text-anchor="end" font-family="Liberation Serif" font-size="11.3" fill="#545454" letter-spacing="0.3">0</text>
<text x="842.5" y="725.2" text-anchor="end" font-family="Liberation Serif" font-size="11.3" fill="#545454" letter-spacing="0.3">500</text>
<text x="842.5" y="697.3" text-anchor="end" font-family="Liberation Serif" font-size="11.3" fill="#545454" letter-spacing="0.3">1000</text>
<text x="842.5" y="669.5" text-anchor="end" font-family="Liberation Serif" font-size="11.3" fill="#545454" letter-spacing="0.3">1500</text>
<text x="842.5" y="641.6" text-anchor="end" font-family="Liberation Serif" font-size="11.3" fill="#545454" letter-spacing="0.3">2000</text>
<text x="842.5" y="613.8" text-anchor="end" font-family="Liberation Serif" font-size="11.3" fill="#545454" letter-spacing="0.3">2500</text>
<text x="842.5" y="586.0" text-anchor="end" font-family="Liberation Serif" font-size="11.3" fill="#545454" letter-spacing="0.3">3000</text>
</svg>
<div class="bt sl" style="left:9px;top:782px;width:127px;height:17px;line-height:15px;letter-spacing:0.33px">Update Rate (8 secs)<i style="left:107px"></i><b style="left:112px"><svg width="7" height="10" viewBox="0 0 7 10"><path d="M1 4 L3.5 1.5 L6 4 M1 6 L3.5 8.5 L6 6" stroke="#333" stroke-width="1.2" fill="none"/></svg></b></div>
<div class="bt" style="left:341px;top:781px;width:95px;height:17px;line-height:15px">Auto Update ON</div>
<div class="bt" style="left:9px;top:801px;width:109px;height:18px">Empty Log Window</div>
<div class="bt" style="left:124px;top:801px;width:141px;height:18px">Send Log Window to ELog</div>
<div class="bt" style="left:271px;top:801px;width:50px;height:18px">Reload</div>
<div class="bt" style="left:327px;top:801px;width:45px;height:18px">Reset</div>
<div class="bt" style="left:377px;top:801px;width:90px;height:18px">Show Variables</div>
<div class="bt" style="left:473px;top:801px;width:105px;height:18px">Show Log Window</div>
<div class="bt" style="left:584px;top:801px;width:92px;height:18px">Enable Logging</div>
<div class="bt" style="left:1317px;top:801px;width:119px;height:18px">How to use this page</div>
<div class="sv" style="left:1202px;top:833px;font-size:13.1px;font-weight:normal;letter-spacing:0.5px">Last Updated: January 12, 2016 15:27:17</div>
<div class="hr" style="left:8px;top:857px;width:1429px"></div>
<div class="sv" style="left:9px;top:869px;font-size:13.1px;font-weight:normal;color:#0000ee;letter-spacing:0.6px"><u style="color:#0000ee">Home</u></div>
<div id="bot" class="a"></div>
<div class="a" style="left:1443px;top:26px;width:1px;height:1002px;background:#f4f4f4"></div>
<div class="a" style="left:2px;top:1027px;width:1442px;height:1px;background:#f8f8f8"></div>
</body></html>
